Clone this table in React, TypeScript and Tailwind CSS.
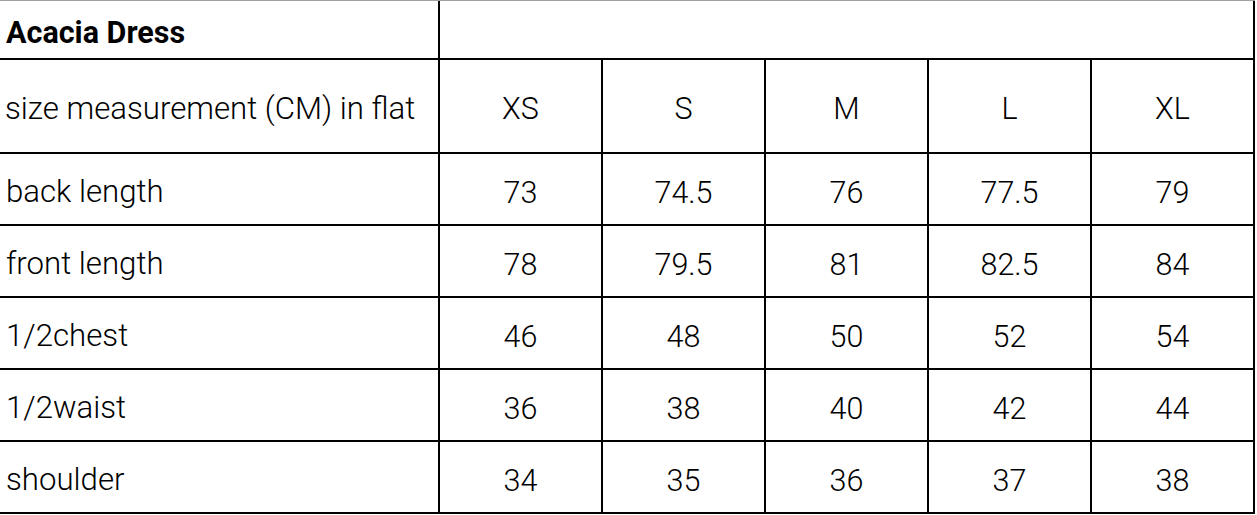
import * as React from "react";

const sizes = ["XS", "S", "M", "L", "XL"];

const rows: { label: string; values: string[] }[] = [
    { label: "back length", values: ["73", "74.5", "76", "77.5", "79"] },
    { label: "front length", values: ["78", "79.5", "81", "82.5", "84"] },
    { label: "1/2chest", values: ["46", "48", "50", "52", "54"] },
    { label: "1/2waist", values: ["36", "38", "40", "42", "44"] },
    { label: "shoulder", values: ["34", "35", "36", "37", "38"] },
];

const cell = "flex items-center border-r-2 border-b-2 border-black";

export default function App() {
    return (
        <div className="w-[1257px] h-[515px] bg-white text-black font-['Roboto',sans-serif] font-light">
            <div className="w-[1255px] border-t border-[#a0a0a0]">
                {/* title row */}
                <div className="grid grid-cols-[440px_815px] h-[59px]">
                    <div className={`${cell} pl-[6px] pt-[6px] text-[30.5px] font-bold`}>Acacia Dress</div>
                    <div className={cell}></div>
                </div>

                {/* size header */}
                <div className="grid grid-cols-[440px_repeat(5,163px)] h-[94px] text-[30.5px]">
                    <div className={`${cell} pl-[5px] pt-[6px] text-[31.2px]`}>size measurement (CM) in flat</div>
                    {sizes.map((s) => (
                        <div key={s} className={`${cell} justify-center pt-[6px]`}>{s}</div>
                    ))}
                </div>

                {rows.map((r) => (
                    <div key={r.label} className="grid grid-cols-[440px_repeat(5,163px)] h-[72px] text-[30.5px]">
                        <div className={`${cell} pl-[6px] pt-[7px] text-[31.2px]`}>{r.label}</div>
                        {r.values.map((v, i) => (
                            <div key={i} className={`${cell} justify-center pt-[7px]`}>{v}</div>
                        ))}
                    </div>
                ))}
            </div>
        </div>
    );
}
